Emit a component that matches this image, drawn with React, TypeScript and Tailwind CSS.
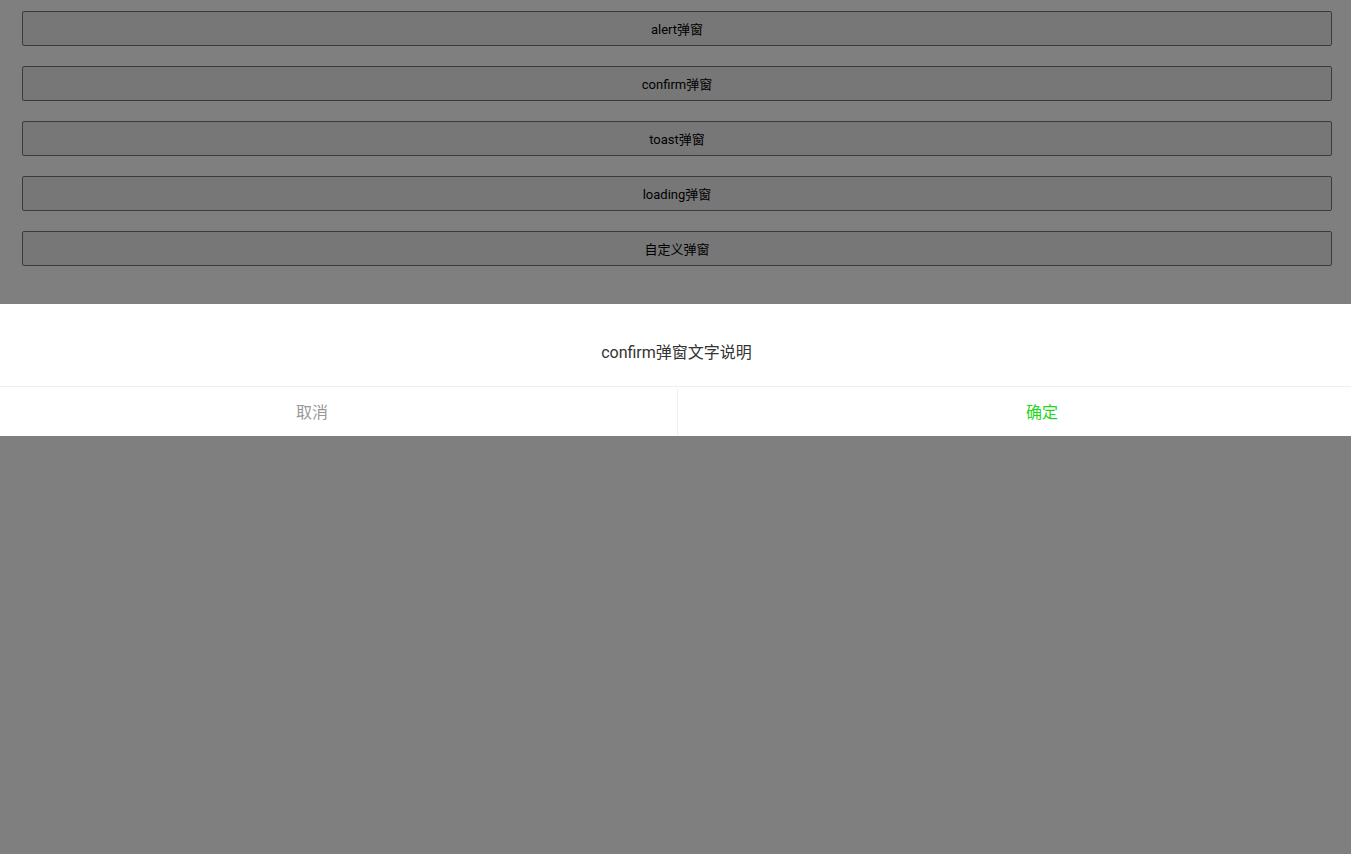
const ITEMS = ["alert弹窗", "confirm弹窗", "toast弹窗", "loading弹窗", "自定义弹窗"];

export default function App() {
  return (
    <div
      className="relative min-h-[854px] bg-white"
      style={{ fontFamily: 'Roboto, "Noto Sans CJK SC", sans-serif' }}
    >
      <div className="flex flex-col gap-5 pl-[22px] pr-[19px] pt-[11px]">
        {ITEMS.map((t) => (
          <button
            key={t}
            className="h-[35px] w-full rounded-[2px] border border-[#767676] bg-[#efefef] pt-[3px] text-[13px] text-black"
          >
            {t}
          </button>
        ))}
      </div>

      {/* mask */}
      <div className="fixed inset-0 bg-black/50" />

      {/* confirm dialog */}
      <div className="absolute inset-x-0 top-[304px] bg-white">
        <div className="h-[82px] pt-[37px] pl-[2px] text-center text-[16px] leading-[24px] text-[#333]">
          confirm弹窗文字说明
        </div>
        <div className="flex h-[50px] border-t border-[#f0f0f0] pt-[2px] text-[16px]">
          <div className="flex w-[677px] items-center justify-center pr-[53px] text-[#999]">
            取消
          </div>
          <div className="flex flex-1 items-center justify-center border-l border-[#f0f0f0] pl-[55px] text-[#22d622]">
            确定
          </div>
        </div>
      </div>
    </div>
  );
}
